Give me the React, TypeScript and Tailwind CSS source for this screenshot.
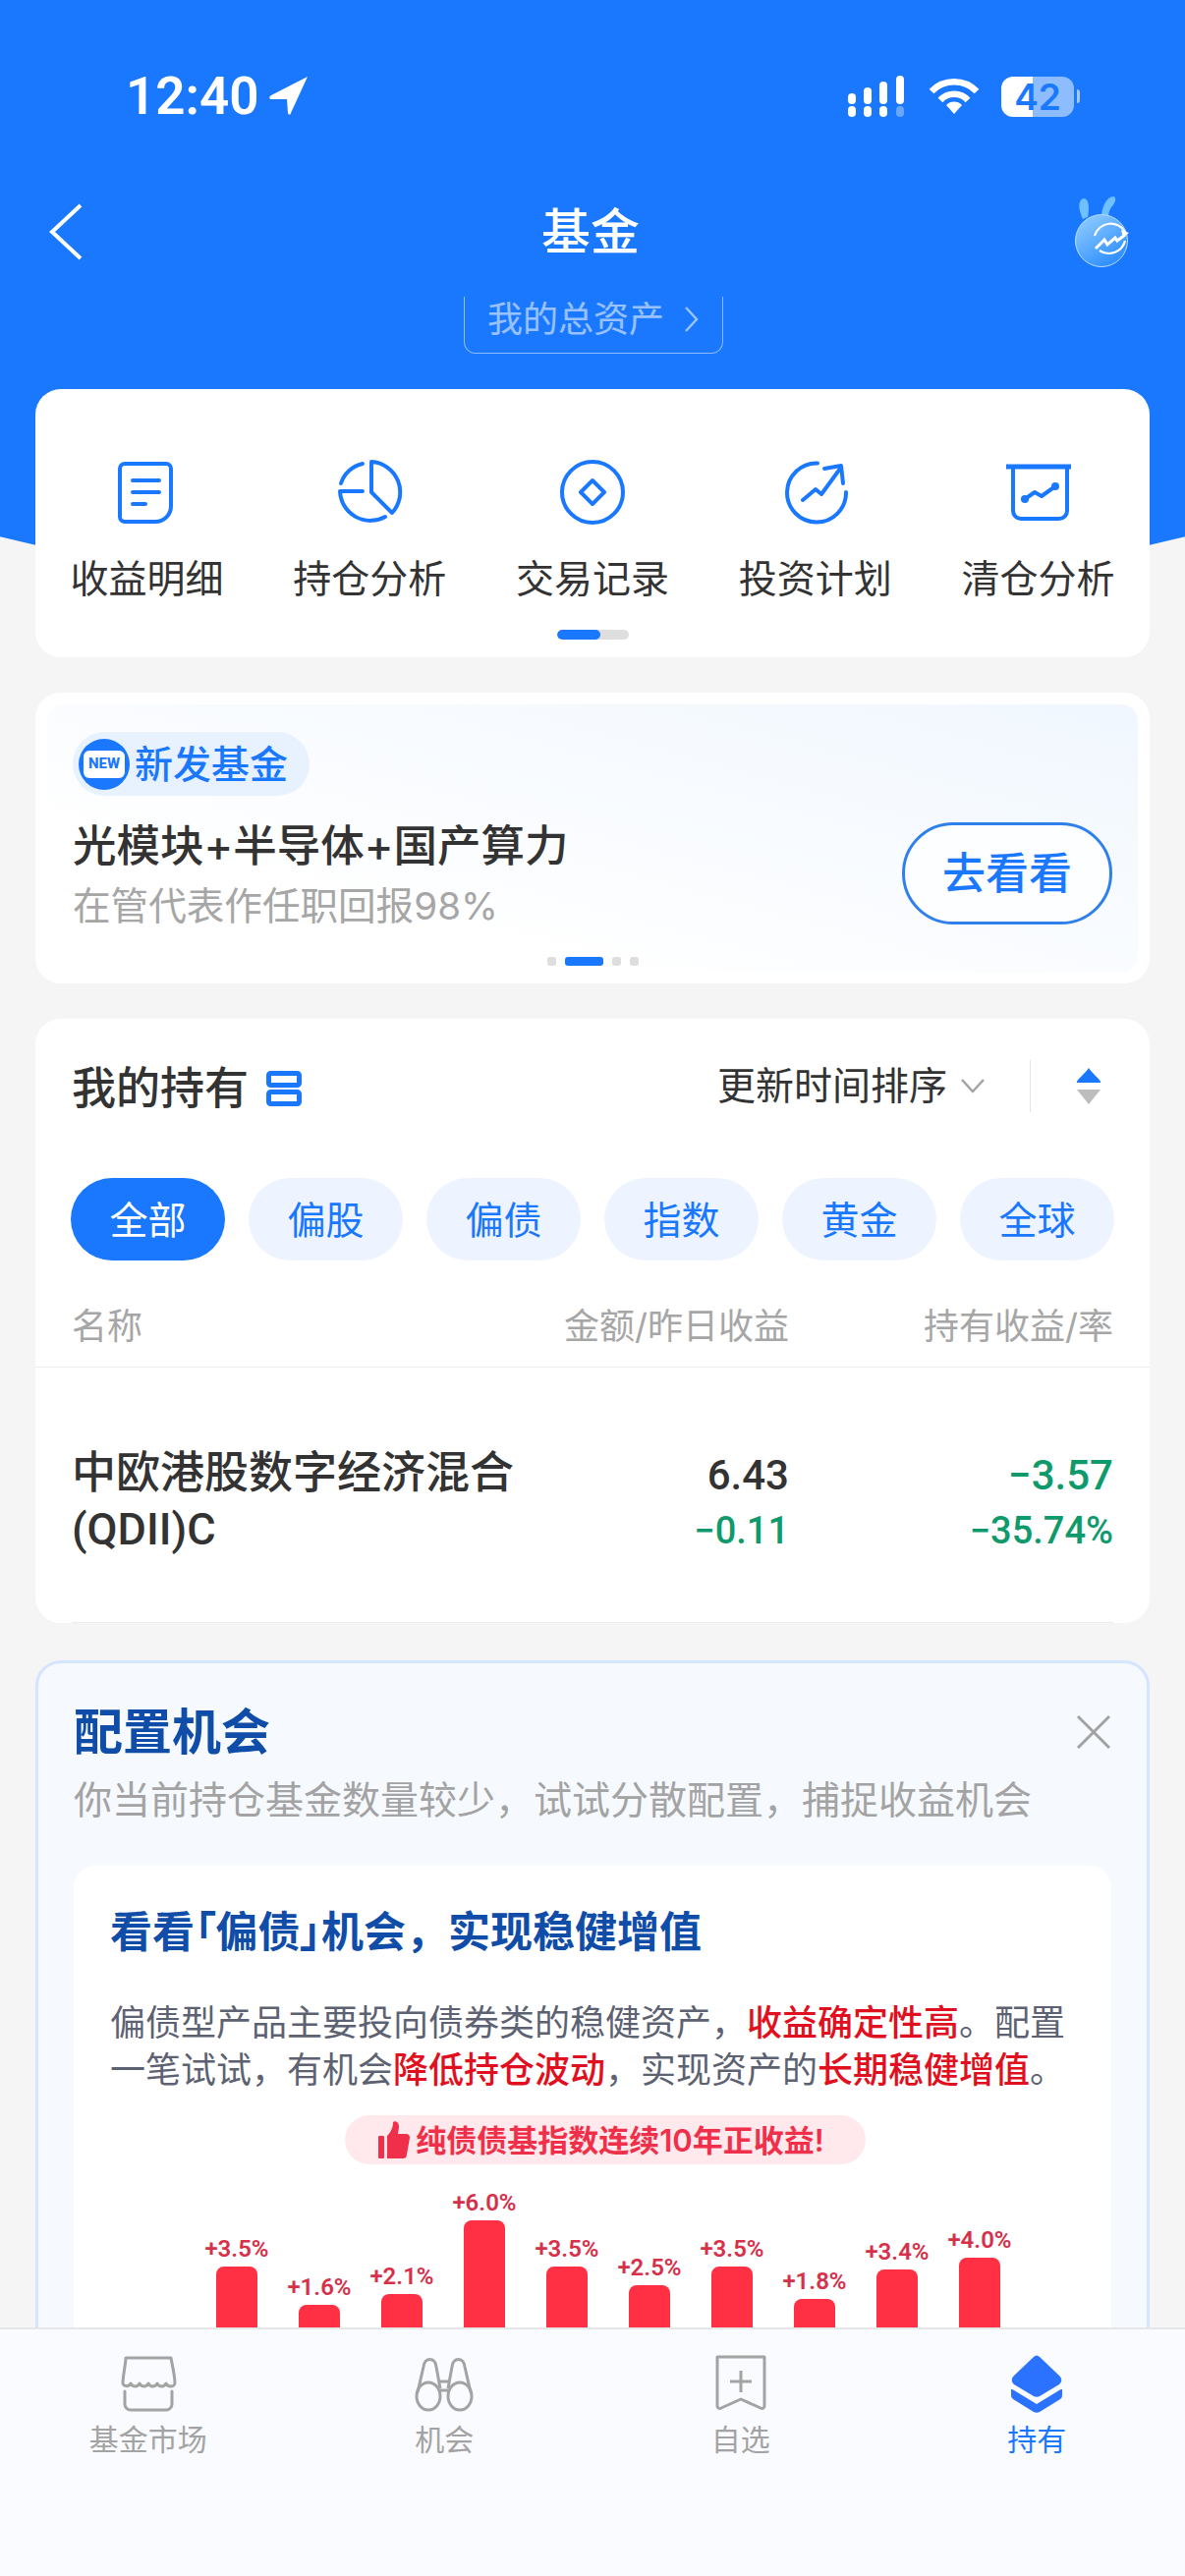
const tabs = ['全部', '偏股', '偏债', '指数', '黄金', '全球'];

const bars = [
  { label: '+3.5%', height: 80 },
  { label: '+1.6%', height: 41 },
  { label: '+2.1%', height: 52 },
  { label: '+6.0%', height: 127 },
  { label: '+3.5%', height: 80 },
  { label: '+2.5%', height: 61 },
  { label: '+3.5%', height: 80 },
  { label: '+1.8%', height: 47 },
  { label: '+3.4%', height: 77 },
  { label: '+4.0%', height: 89 },
];

function DetailIcon() {
  return (
    <svg width="72" height="72" viewBox="0 0 72 72" fill="none" stroke="#1a78ff" strokeWidth="4" strokeLinecap="round">
      <path d="M14 7h42a5 5 0 0 1 5 5v38c0 9-7 16-16 16H14a5 5 0 0 1-5-5V12a5 5 0 0 1 5-5z" />
      <path d="M22 24h27M22 36h27M22 48h13" />
    </svg>
  );
}

function PieIcon() {
  return (
    <svg width="72" height="72" viewBox="0 0 72 72" fill="none" stroke="#1a78ff" strokeWidth="4" strokeLinecap="round" strokeLinejoin="round">
      <path d="M38 5A31 31 0 0 1 59 57L38 36z" />
      <path d="M29 7A30 30 0 0 0 7 27" />
      <path d="M29 35H6A31 31 0 0 0 52 61" />
    </svg>
  );
}

function CoinIcon() {
  return (
    <svg width="72" height="72" viewBox="0 0 72 72" fill="none" stroke="#1a78ff" strokeWidth="4" strokeLinejoin="round">
      <circle cx="36" cy="36" r="31" />
      <path d="M36 24l12 12-12 12-12-12z" />
    </svg>
  );
}

function PlanIcon() {
  return (
    <svg width="72" height="72" viewBox="0 0 72 72" fill="none" stroke="#1a78ff" strokeWidth="4" strokeLinecap="round" strokeLinejoin="round">
      <path d="M38 6.5A30 30 0 1 0 67 36" />
      <path d="M23 44l13-11 6 5 19-26" />
      <path d="M45 12l17-3 2 18" />
    </svg>
  );
}

function ClearIcon() {
  return (
    <svg width="72" height="72" viewBox="0 0 72 72" fill="none" stroke="#1a78ff" strokeWidth="4" strokeLinecap="round" strokeLinejoin="round">
      <path d="M3 10h66" strokeWidth="5" strokeLinecap="butt" />
      <path d="M10 12v43a8 8 0 0 0 8 8h39a8 8 0 0 0 8-8V12" />
      <path d="M22 43l10-7 7 4 14-10" />
      <circle cx="22" cy="43" r="4" fill="#1a78ff" stroke="none" />
      <circle cx="53" cy="30" r="4" fill="#1a78ff" stroke="none" />
    </svg>
  );
}

const shortcuts = [
  { label: '收益明细', icon: <DetailIcon /> },
  { label: '持仓分析', icon: <PieIcon /> },
  { label: '交易记录', icon: <CoinIcon /> },
  { label: '投资计划', icon: <PlanIcon /> },
  { label: '清仓分析', icon: <ClearIcon /> },
];

function Mascot() {
  return (
    <svg width="62" height="76" viewBox="0 0 62 76">
      <defs>
        <linearGradient id="mascotBody" x1="0.1" y1="0.1" x2="0.7" y2="1">
          <stop offset="0" stopColor="#8ccaff" />
          <stop offset="1" stopColor="#2a8cff" />
        </linearGradient>
      </defs>
      <path d="M12 25C7 14 7 5 13 4c5 0 6 9 4 19z" fill="#6fc0ff" />
      <path d="M31 21c1-10 6-19 12-19 4 1 2 7-2 11-2 3-3 6-3 10z" fill="#6fc0ff" />
      <circle cx="31" cy="47" r="26.5" fill="url(#mascotBody)" stroke="#b5dcff" strokeWidth="1" />
      <path d="M24 42a17 17 0 0 1 31-4M55 47a17 17 0 0 1-26 10" fill="none" stroke="#fff" strokeWidth="2.2" />
      <path d="M25 55l9-9 3 5 8-7 2 3 8-6" fill="none" stroke="#fff" strokeWidth="3" />
      <path d="M51 36l8 3-6 5z" fill="#fff" />
    </svg>
  );
}

function StatusIcons() {
  return (
    <div className="flex items-center">
      <svg width="60" height="42" viewBox="0 0 60 42" fill="#fff">
        <rect x="0" y="18" width="8" height="11" rx="4" />
        <rect x="16" y="12" width="8" height="17" rx="4" />
        <rect x="32" y="6" width="8" height="23" rx="4" />
        <rect x="49" y="0" width="8" height="29" rx="4" />
        <rect x="0" y="31" width="8" height="11" rx="4" />
        <rect x="16" y="31" width="8" height="11" rx="4" />
        <rect x="32" y="31" width="8" height="11" rx="4" />
        <rect x="49" y="31" width="8" height="11" rx="4" fillOpacity="0.35" />
      </svg>
      <svg className="ml-[22px]" width="52" height="38" viewBox="0 0 52 38" fill="none" stroke="#fff" strokeWidth="6.5">
        <path d="M3 14a32 32 0 0 1 46 0" />
        <path d="M12 23a19 19 0 0 1 28 0" />
        <path d="M26 37l-8-9a11 11 0 0 1 16 0z" fill="#fff" stroke="none" />
      </svg>
      <div className="ml-[22px] flex items-center">
        <div className="flex h-[41px] w-[74px] items-center justify-center rounded-[12px] bg-[linear-gradient(90deg,#fff_0,#fff_43%,#8dbcff_43%,#8dbcff_100%)] text-[37px] leading-none font-semibold text-[#1a78ff]">
          42
        </div>
        <div className="ml-[3px] h-[14px] w-[3px] rounded-r-full bg-white/60" />
      </div>
    </div>
  );
}

function MarketIcon() {
  return (
    <svg width="60" height="60" viewBox="0 0 60 60" fill="none" stroke="#a3a3a3" strokeWidth="3" strokeLinejoin="round" strokeLinecap="round">
      <path d="M7 3h46c1 6 4 18 4 26-1 4-7 4-9 0-2 4-7 4-9 0-2 4-7 4-9 0-2 4-7 4-9 0-2 4-7 4-9 0-2 4-7 3-8 0 0-8 3-20 3-26z" />
      <path d="M6 37v13a6 6 0 0 0 6 6h36a6 6 0 0 0 6-6V37" />
    </svg>
  );
}

function BinocularsIcon() {
  return (
    <svg width="60" height="60" viewBox="0 0 60 60" fill="none" stroke="#a3a3a3" strokeWidth="3" strokeLinejoin="round">
      <ellipse cx="14" cy="42" rx="12" ry="14" />
      <ellipse cx="46" cy="42" rx="12" ry="14" />
      <path d="M3 38L9 12c1-10 12-10 13 0l4 22" />
      <path d="M57 38L51 12c-1-10-12-10-13 0l-4 22" />
      <path d="M24 27h12" />
      <path d="M26 36h8" />
    </svg>
  );
}

function WatchIcon() {
  return (
    <svg width="60" height="60" viewBox="0 0 60 60" fill="none" stroke="#a3a3a3" strokeWidth="3" strokeLinejoin="round">
      <path d="M6 2h48v50c0 2-2 3-4 2l-20-9-20 9c-2 1-4 0-4-2z" />
      <path d="M30 16v22M19 27h22" />
    </svg>
  );
}

function HoldIcon() {
  return (
    <svg width="60" height="60" viewBox="0 0 60 60" fill="#2a72ff">
      <path d="M27 2c2-2 4-2 6 0l20 19c3 3 3 6 0 9L33 42c-2 1-4 1-6 0L7 30c-3-3-3-6 0-9z" />
      <path d="M4 35c1 0 2 0 3 1l23 14 23-14c1-1 2-1 3-1v6c0 2-1 3-2 4L33 58c-2 1-4 1-6 0L6 45c-1-1-2-2-2-4z" />
    </svg>
  );
}

const bottomTabs = [
  { label: '基金市场', icon: <MarketIcon />, active: false },
  { label: '机会', icon: <BinocularsIcon />, active: false },
  { label: '自选', icon: <WatchIcon />, active: false },
  { label: '持有', icon: <HoldIcon />, active: true },
];

export default function App() {
  return (
    <div className="flex h-[2622px] w-[1206px] flex-col overflow-hidden bg-[#f5f5f5] font-['Inter','Noto_Sans_CJK_SC',sans-serif]">
      <main className="min-h-0 flex-1 overflow-hidden">
        {/* Blue header */}
        <header className="h-[617px] bg-[#1a78ff] text-white [clip-path:ellipse(1296px_617px_at_50%_0)]">
          <div className="flex h-[196px] items-center justify-between pr-[107px] pl-[128px]">
            <div className="flex items-center">
              <span className="font-['Roboto'] text-[53px] leading-none font-semibold">12:40</span>
              <svg className="ml-[9px]" width="44" height="40" viewBox="0 0 44 40" fill="#fff">
                <path d="M40 0L3 19c-3 2-2 4 1 4h15l1 14c0 2 3 2 3 0z" />
              </svg>
            </div>
            <StatusIcons />
          </div>
          <div className="grid h-[80px] grid-cols-[1fr_auto_1fr] items-center pr-[54px] pl-[50px]">
            <svg width="34" height="58" viewBox="0 0 34 58" fill="none" stroke="#fff" strokeWidth="4">
              <path d="M32 2L3 29l29 27" />
            </svg>
            <div className="text-[50px] leading-none font-medium">基金</div>
            <div className="justify-self-end">
              <Mascot />
            </div>
          </div>
          <div className="mt-[26px] flex justify-center pl-[2px]">
            <div className="flex h-[58px] w-[264px] items-center justify-center rounded-b-[12px] border border-t-0 border-white/50 pb-[12px] text-[36px] leading-none text-white/55">
              我的总资产
              <svg className="ml-[20px]" width="16" height="28" viewBox="0 0 16 28" fill="none" stroke="#fff" strokeOpacity="0.55" strokeWidth="2.5">
                <path d="M2 2l11 12L2 26" />
              </svg>
            </div>
          </div>
        </header>

        <div className="relative -mt-[221px] flex flex-col px-[36px]">
          {/* Shortcuts */}
          <section className="h-[273px] rounded-[26px] bg-white pt-[69px]">
            <div className="grid grid-cols-5">
              {shortcuts.map((item) => (
                <div key={item.label} className="flex flex-col items-center">
                  {item.icon}
                  <div className="mt-[28px] text-[39px] leading-[48px] text-[#333]">{item.label}</div>
                </div>
              ))}
            </div>
            <div className="mt-[28px] flex justify-center">
              <div className="flex h-[10px] w-[73px] overflow-hidden rounded-full bg-[#dedede]">
                <div className="w-[44px] rounded-full bg-[#1a78ff]" />
              </div>
            </div>
          </section>

          {/* New fund banner */}
          <section className="mt-[36px] h-[296px] rounded-[26px] bg-white px-[12px] pt-[12px]">
            <div className="h-[272px] rounded-[16px] bg-[linear-gradient(195deg,#f0f7fe_0%,#f8fbff_40%,#ffffff_75%)] pt-[28px] pr-[26px] pl-[26px]">
              <div className="flex h-[65px] w-[241px] items-center rounded-full bg-[#e8f2ff] pl-[6px]">
                <div className="flex h-[52px] w-[52px] items-center justify-center rounded-full bg-[#1a78ff]">
                  <div className="flex h-[28px] w-[42px] items-center justify-center rounded-[6px] bg-white font-['Roboto'] text-[15px] leading-none font-extrabold text-[#1a78ff]">
                    NEW
                  </div>
                </div>
                <span className="ml-[5px] text-[39px] leading-none font-medium text-[#1a78ff]">新发基金</span>
              </div>
              <div className="mt-[27px] flex items-start justify-between">
                <div className="-mt-[3px]">
                  <div className="text-[44.5px] leading-[54px] font-medium text-[#333]">光模块+半导体+国产算力</div>
                  <div className="mt-[7px] text-[38.6px] leading-[54px] text-[#a6a6a6]">在管代表作任职回报98%</div>
                </div>
                <div className="flex h-[104px] w-[214px] items-center justify-center rounded-full border-[3px] border-[#2f80ed] bg-white/70 text-[44px] leading-none font-medium text-[#1a78ff]">
                  去看看
                </div>
              </div>
              <div className="mt-[25px] flex justify-center gap-[9px]">
                <div className="h-[9px] w-[9px] rounded-[3px] bg-[#dedede]" />
                <div className="h-[9px] w-[39px] rounded-[3px] bg-[#1a78ff]" />
                <div className="h-[9px] w-[9px] rounded-[3px] bg-[#dedede]" />
                <div className="h-[9px] w-[9px] rounded-[3px] bg-[#dedede]" />
              </div>
            </div>
          </section>

          {/* Holdings */}
          <section className="mt-[36px] h-[615px] rounded-[26px] bg-white">
            <div className="flex h-[145px] items-start px-[37px] pt-[40px]">
              <div className="flex items-center">
                <span className="text-[45px] leading-[62px] font-medium text-[#333]">我的持有</span>
                <svg className="ml-[18px]" width="36" height="36" viewBox="0 0 36 36" fill="none" stroke="#1a78ff" strokeWidth="5">
                  <rect x="2.5" y="2.5" width="31" height="12" rx="2" />
                  <rect x="2.5" y="21.5" width="31" height="12" rx="2" />
                </svg>
              </div>
              <div className="mr-[13px] ml-auto flex items-center">
                <span className="text-[39px] leading-[56px] text-[#333]">更新时间排序</span>
                <svg className="ml-[13px]" width="26" height="16" viewBox="0 0 26 16" fill="none" stroke="#a3a3a3" strokeWidth="2.5">
                  <path d="M2 2l11 12L24 2" />
                </svg>
                <div className="mr-[47px] ml-[45px] h-[53px] w-px bg-[#e5e5e5]" />
                <svg width="24" height="37" viewBox="0 0 24 37">
                  <path d="M12 0c3 5 12 12 12 14v1H0v-1C0 12 9 5 12 0z" fill="#1a78ff" />
                  <path d="M0 22h24L12 37z" fill="#bdbdbd" />
                </svg>
              </div>
            </div>
            <div className="flex gap-[24px] px-[36px] pt-[17px]">
              {tabs.map((tab, i) => (
                <div
                  key={tab}
                  className={
                    i === 0
                      ? 'flex h-[84px] w-[157px] items-center justify-center rounded-full bg-[#1a78ff] text-[39px] leading-none text-white'
                      : 'flex h-[84px] w-[157px] items-center justify-center rounded-full bg-[#edf4ff] text-[39px] leading-none text-[#1a78ff]'
                  }
                >
                  {tab}
                </div>
              ))}
            </div>
            <div className="mt-[46px] flex h-[63px] items-start border-b border-[#ededed] px-[37px] text-[36px] leading-[42px] text-[#a6a6a6]">
              <span>名称</span>
              <span className="ml-auto w-[400px] text-right">金额/昨日收益</span>
              <span className="w-[330px] text-right">持有收益/率</span>
            </div>
            <div className="mx-[37px] flex h-[260px] items-start border-b border-[#ececec] pt-[79px]">
              <div className="w-[460px] font-['Roboto','Noto_Sans_CJK_SC',sans-serif] text-[45px] leading-[57px] font-medium text-[#333]">
                中欧港股数字经济混合(QDII)C
              </div>
              <div className="mt-[2px] ml-auto w-[230px] text-right font-['Roboto'] font-medium">
                <div className="text-[42px] leading-[57px] text-[#333]">6.43</div>
                <div className="text-[38px] leading-[57px] text-[#0f9a6c]">−0.11</div>
              </div>
              <div className="mt-[2px] w-[330px] text-right font-['Roboto'] font-medium">
                <div className="text-[42px] leading-[57px] text-[#0f9a6c]">−3.57</div>
                <div className="text-[38px] leading-[57px] text-[#0f9a6c]">−35.74%</div>
              </div>
            </div>
          </section>

          {/* Allocation opportunity */}
          <section className="mt-[38px] h-[800px] rounded-[26px] border-[3px] border-[#d5e5ff] bg-[#f6faff] px-[36px]">
            <div className="flex items-center justify-between pt-[38px]">
              <span className="text-[50px] leading-[64px] font-bold text-[#0f4da8]">配置机会</span>
              <svg width="36" height="36" viewBox="0 0 36 36" fill="none" stroke="#a3a3a3" strokeWidth="3">
                <path d="M2 2l32 32M34 2L2 34" />
              </svg>
            </div>
            <div className="mt-[10px] text-[39px] leading-[54px] whitespace-nowrap text-[#a3a3a3]">
              你当前持仓基金数量较少，试试分散配置，捕捉收益机会
            </div>
            <div className="mt-[40px] h-[600px] rounded-[22px] bg-white px-[37px] pt-[40px]">
              <div className="text-[43px] leading-[54px] font-bold text-[#0f4da8]">
                看看<span className="[font-feature-settings:'palt']">「偏债」</span>机会，实现稳健增值
              </div>
              <p className="mt-[42px] text-[36px] leading-[48px] text-[#5c6272]">
                偏债型产品主要投向债券类的稳健资产，<span className="font-medium text-[#e01020]">收益确定性高</span>。配置一笔试试，有机会
                <span className="font-medium text-[#e01020]">降低持仓波动</span>，实现资产的
                <span className="font-medium text-[#e01020]">长期稳健增值</span>。
              </p>
              <div className="mt-[22px] flex justify-center pl-[26px]">
                <div className="flex h-[50px] w-[530px] items-center justify-center rounded-full bg-[#ffe9ec] pr-[8px] text-[31px] leading-none font-semibold text-[#f0304a]">
                  <svg className="mr-[6px]" width="32" height="38" viewBox="0 0 32 38" fill="#f0304a">
                    <rect x="0" y="15" width="6" height="23" rx="1" />
                    <path d="M9 15c3-3 6-8 6-13 0-3 6-2 6 3 0 3-1 7-1 8h8c3 0 4 2 4 4l-3 17c0 3-2 4-4 4H9z" />
                  </svg>
                  纯债债基指数连续10年正收益!
                </div>
              </div>
              {/* Ten-year bars run under the tab bar */}
              <div className="mt-[27px] flex h-[157px] items-end pl-[87px]">
                {bars.map((bar, i) => (
                  <div key={i} className="flex w-[84px] shrink-0 flex-col items-center">
                    <div className="mb-[6px] font-['Roboto'] text-[24px] leading-[24px] font-semibold text-[#d6304a]">{bar.label}</div>
                    <div className="w-[42px] rounded-t-[8px] bg-[#ff3044]" style={{ height: bar.height }} />
                  </div>
                ))}
              </div>
            </div>
          </section>
        </div>
      </main>

      {/* Bottom tabs */}
      <nav className="grid h-[253px] shrink-0 grid-cols-4 border-t-2 border-[#e6e6e6] bg-[#f9fbff] pt-[26px]">
        {bottomTabs.map((tab) => (
          <div key={tab.label} className="flex flex-col items-center">
            {tab.icon}
            <div
              className={
                tab.active
                  ? 'mt-[6px] text-[30px] leading-[40px] text-[#1a78ff]'
                  : 'mt-[6px] text-[30px] leading-[40px] text-[#a3a3a3]'
              }
            >
              {tab.label}
            </div>
          </div>
        ))}
      </nav>
    </div>
  );
}
